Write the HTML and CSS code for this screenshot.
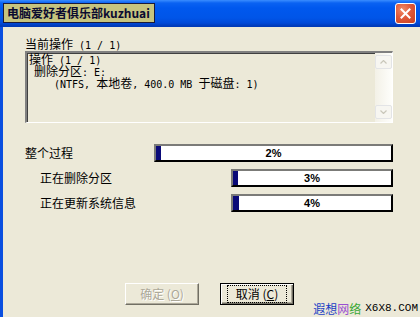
FILE: index.html
```html
<!DOCTYPE html>
<html>
<head>
<meta charset="utf-8">
<link rel="stylesheet" href="styles.css">
</head>
<body>
<div class="window">
  <div class="titlebar">
    <div class="title">电脑爱好者俱乐部kuzhuai</div>
    <div class="close">
      <svg width="11" height="11" viewBox="0 0 11 11"><path d="M1.5 1.5 L9.5 9.5 M9.5 1.5 L1.5 9.5" stroke="#fff" stroke-width="2" stroke-linecap="square"/></svg>
    </div>
  </div>
  <div class="body">
    <div class="section-label">当前操作<span class="lat"> (1 / 1)</span></div>
    <div class="textbox">
      <div class="lines">
        <div class="line">操作<span class="lat"> (1 / 1)</span></div>
        <div class="line ind1">删除分区<span class="lat">: E:</span></div>
        <div class="line ind2"><span class="lat">(NTFS, </span>本地卷<span class="lat">, 400.0 MB </span>于磁盘<span class="lat">: 1)</span></div>
      </div>
      <div class="scrollbar">
        <div class="sb-btn"><svg width="7" height="4" viewBox="0 0 7 4"><path d="M0.5 3.5 L3.5 0.5 L6.5 3.5" fill="none" stroke="#c9c7ba" stroke-width="1.2"/></svg></div>
        <div class="sb-track"></div>
        <div class="sb-btn"><svg width="7" height="4" viewBox="0 0 7 4"><path d="M0.5 0.5 L3.5 3.5 L6.5 0.5" fill="none" stroke="#c9c7ba" stroke-width="1.2"/></svg></div>
      </div>
    </div>
    <div class="progress-list">
      <div class="prow">
        <span class="plabel">整个过程</span>
        <div class="pbar wide"><div class="pfill" style="width:2%"></div><span class="ptext">2%</span></div>
      </div>
      <div class="prow sub">
        <span class="plabel">正在删除分区</span>
        <div class="pbar"><div class="pfill" style="width:3%"></div><span class="ptext">3%</span></div>
      </div>
      <div class="prow sub">
        <span class="plabel">正在更新系统信息</span>
        <div class="pbar"><div class="pfill" style="width:4%"></div><span class="ptext">4%</span></div>
      </div>
    </div>
    <div class="buttons">
      <div class="btn disabled"><span class="btn-in">确定 (<u>O</u>)</span></div>
      <div class="btn default"><span class="btn-in focus">取消 (<u>C</u>)</span></div>
    </div>
    <div class="watermark"><span class="wm-a">遐想</span><span class="wm-b">网</span><span class="wm-c">络</span><span class="wm-d">X6X8.COM</span></div>
  </div>
</div>
</body>
</html>
```
FILE: styles.css
```css
* { box-sizing: border-box; }
html, body { margin: 0; padding: 0; }
body {
  width: 420px;
  height: 317px;
  overflow: hidden;
  background: #ece9d8;
  font-family: "Noto Sans CJK SC", sans-serif;
  font-size: 12px;
  color: #000;
}
.window {
  width: 420px;
  height: 317px;
  display: flex;
  flex-direction: column;
}
.titlebar {
  height: 27px;
  flex: none;
  display: flex;
  align-items: flex-start;
  justify-content: space-between;
  padding: 3px 4px 0 3px;
  background: linear-gradient(to bottom, #3a8dff 0px, #0a62f2 3px, #0058ee 8px, #0055e8 18px, #0049d8 23px, #003ab8 26px, #003ab8 27px);
}
.title {
  height: 20px;
  width: 152px;
  background: #c6c47f;
  border: 1px solid #1a1a3a;
  font-weight: bold;
  font-size: 12px;
  line-height: 18px;
  padding-left: 3px;
  color: #0b0b30;
  white-space: nowrap;
  overflow: hidden;
}
.close {
  width: 21px;
  height: 21px;
  border: 1px solid #fff;
  border-radius: 3px;
  background: radial-gradient(circle at 35% 30%, #f08c6a 0%, #e0593a 45%, #c8401f 100%);
  display: flex;
  align-items: center;
  justify-content: center;
}
.body {
  flex: 1;
  min-height: 0;
  display: flex;
  flex-direction: column;
  border-left: 3px solid #0a4fe0;
  padding: 10px 27px 0 22px;
}
.lat {
  font-family: "DejaVu Sans Mono", monospace;
  font-size: 10px;
  white-space: pre;
}
.section-label {
  height: 14px;
  line-height: 14px;
  white-space: nowrap;
}
.textbox {
  height: 72px;
  flex: none;
  display: flex;
  background: #ece9d8;
  border-style: solid;
  border-width: 2px 1px 1px 2px;
  border-color: #808080 #ffffff #ffffff #808080;
  box-shadow: inset 1px 1px 0 #404040;
}
.lines {
  flex: 1;
  padding: 0 0 0 2px;
}
.line {
  height: 12px;
  line-height: 12px;
  white-space: nowrap;
}
.ind1 { padding-left: 5px; }
.ind2 { padding-left: 25px; }
.scrollbar {
  width: 17px;
  display: flex;
  flex-direction: column;
  padding: 2px 0 3px;
  background: linear-gradient(to right, #f3f1e7, #fefefb);
}
.sb-btn {
  height: 14px;
  border: 1px solid #e3e4e6;
  border-radius: 2px;
  background: #f7f6f1;
  display: flex;
  align-items: center;
  justify-content: center;
}
.sb-track { flex: 1; }
.progress-list {
  margin-top: 21px;
  display: flex;
  flex-direction: column;
  gap: 7px;
}
.prow {
  height: 18px;
  display: flex;
  align-items: center;
  justify-content: space-between;
}
.prow.sub { padding-left: 15px; }
.plabel { line-height: 14px; }
.pbar {
  position: relative;
  width: 162px;
  height: 18px;
  background: #fff;
  border-style: solid;
  border-width: 2px;
  border-color: #7b7b78 #000 #000 #7b7b78;
  display: flex;
  align-items: center;
}
.pbar.wide { width: 239px; }
.pfill {
  align-self: stretch;
  background: #0a0a78;
  min-width: 4px;
}
.ptext {
  position: absolute;
  left: 0;
  right: 0;
  text-align: center;
  font-family: "Liberation Sans", sans-serif;
  font-weight: bold;
  font-size: 11px;
  line-height: 14px;
}
.buttons {
  margin-top: 71px;
  flex: none;
  display: flex;
  gap: 21px;
  padding-left: 100px;
}
.btn {
  width: 74px;
  height: 22px;
  display: flex;
  align-items: center;
  justify-content: center;
  background: #ece9d8;
  border-style: solid;
  border-width: 1px;
  border-color: #fff #716f64 #716f64 #fff;
  box-shadow: inset -1px -1px 0 #aca899;
}
.btn.disabled { color: #aca899; text-shadow: 1px 1px 0 #fff; }
.btn.default {
  border: 1px solid #000;
  box-shadow: inset 1px 1px 0 #fff, inset -1px -1px 0 #716f64, inset -2px -2px 0 #aca899;
}
.btn-in {
  line-height: 14px;
  padding: 1px 6px;
}
.btn-in.focus { outline: 1px dotted #000; outline-offset: 0; padding: 1px 8px; }
.watermark {
  margin-top: -4px;
  flex: none;
  align-self: flex-end;
  margin-right: -27px;
  display: flex;
  align-items: center;
  height: 14px;
  line-height: 13px;
  font-size: 12px;
}
.wm-a { color: #1b3fc4; }
.wm-b { color: #9a4fd1; }
.wm-c { color: #3aa836; }
.wm-d { font-family: "Liberation Mono", monospace; font-size: 11px; margin-left: 4px; padding-right: 2px; }
```
